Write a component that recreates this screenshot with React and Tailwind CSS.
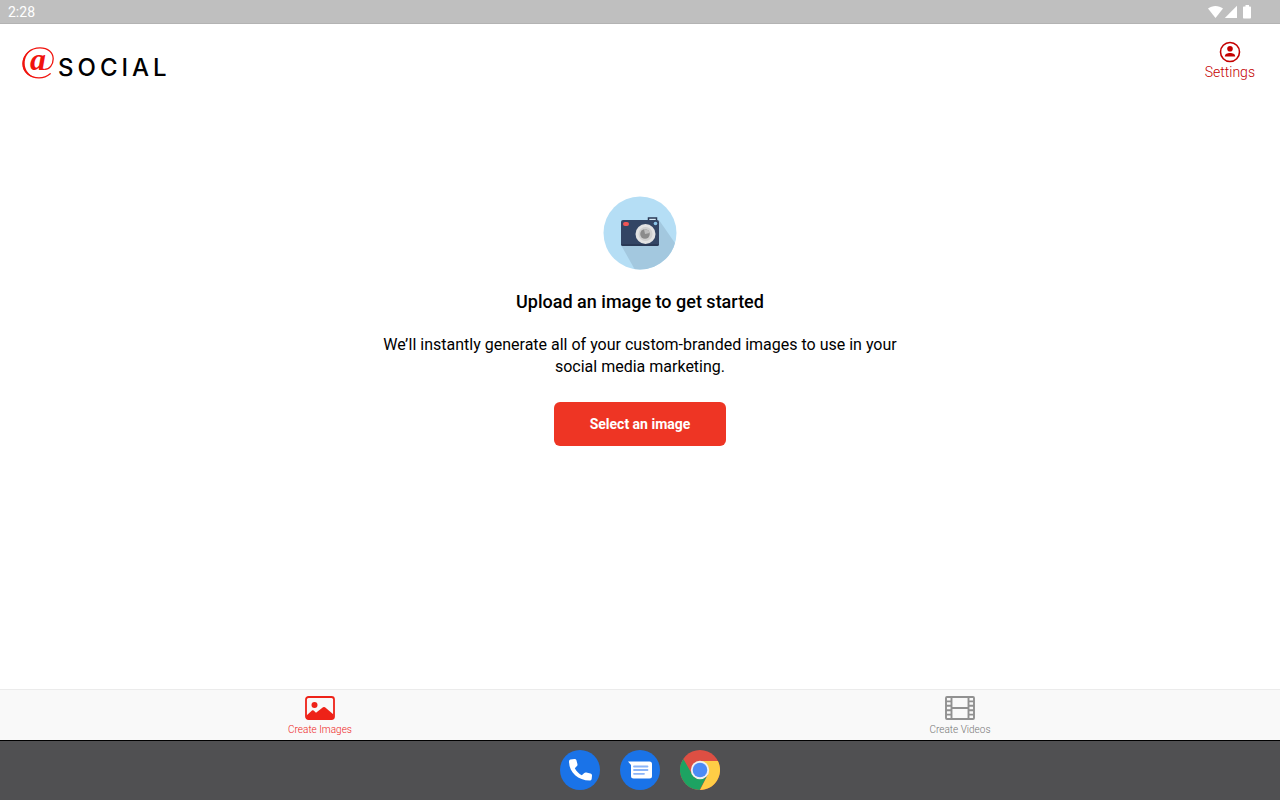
function AtSocialLogo() {
  return (
    <a href="#home" className="flex items-center gap-1" aria-label="@SOCIAL">
      <svg width="32" height="32" viewBox="0 0 32 32" className="overflow-visible" aria-hidden="true">
        <path
          d="M28.2 26.800C25.200 29.400 21.300 30.900 17 30.900C8.200 30.900 1 25.200 1 16.600C1 7.600 8.500 .9 18 .9C26 .9 31.200 5.500 31.200 11.800C31.200 17.800 27.300 22.400 22.800 22.400"
          fill="none"
          stroke="#f0140e"
          strokeWidth="1.300"
          strokeLinecap="round"
        />
        <path
          d="M.5 17C.4 10.600 4.500 4.600 10.500 2.200C5.500 5.800 2.700 10.500 2.700 16.500C2.700 23 7 28.300 13 30.600C5.500 29.300 .6 24 .5 17Z"
          fill="#f0140e"
        />
        <text x="8" y="23" fill="#f0140e" className="font-['Liberation_Serif',serif] text-[32px] leading-6 font-bold italic">
          a
        </text>
      </svg>
      <span className="pt-2.5 font-[Inter,sans-serif] text-2xl leading-6 font-medium tracking-[4px] text-black">
        SOCIAL
      </span>
    </a>
  );
}

function StatusBar() {
  return (
    <div className="flex h-6 items-center justify-between border-b border-[#b3b3b3] bg-[#bfbfbf] pr-[27px] pl-2 text-white">
      <span className="text-sm leading-6">2:28</span>
      <svg width="46" height="16" viewBox="0 0 46 16" fill="currentColor" aria-hidden="true">
        <path d="M1 4.600C5.200 1 11.800 1 16 4.600L8.500 14Z" />
        <path d="M30 1.800V14H17.800Z" />
        <path d="M38.500 1H42V2.400H43.200C43.700 2.400 44 2.800 44 3.400V13.600C44 14.200 43.700 14.600 43.200 14.600H37C36.400 14.600 36 14.200 36 13.600V3.400C36 2.800 36.400 2.400 37 2.400H38.500Z" />
      </svg>
    </div>
  );
}

function CameraIcon() {
  return (
    <svg width="74" height="74" viewBox="0 0 74 74" aria-hidden="true">
      <defs>
        <clipPath id="disc">
          <circle cx="37" cy="37" r="36.500" />
        </clipPath>
      </defs>
      <circle cx="37" cy="37" r="36.500" fill="#b5def5" />
      <path d="M18 49L40 88H92V76L56 24Z" fill="#a3c8df" clipPath="url(#disc)" />
      <rect x="45.500" y="22" width="8" height="3" fill="#d8eaf5" stroke="#2b3a55" strokeWidth="1.500" />
      <rect x="18" y="24" width="38" height="26" rx="2" fill="#334564" />
      <path d="M18 48H56A2 2 0 0 1 54 50H20A2 2 0 0 1 18 48Z" fill="#2a3955" />
      <rect x="20" y="26" width="6" height="4" rx="2" fill="#f05555" />
      <circle cx="52.500" cy="27.500" r="1.800" fill="#8cc5e8" />
      <circle cx="42.500" cy="38" r="10" fill="#e3e3e3" />
      <circle cx="42.500" cy="38" r="7" fill="#cfcfcf" />
      <circle cx="42" cy="38" r="4.800" fill="#8b8b8b" />
      <path d="M42 38L41 33.300A4.800 4.800 0 0 1 46.700 37Z" fill="#bdbdbd" />
    </svg>
  );
}

function ProfileIcon() {
  return (
    <svg width="22" height="22" viewBox="0 0 22 22" aria-hidden="true">
      <circle cx="11" cy="11" r="9.500" fill="none" stroke="currentColor" strokeWidth="1.600" />
      <circle cx="11" cy="7.800" r="2.800" fill="currentColor" />
      <path d="M5.800 15.500C5.800 12.700 8.400 11.900 11 11.900S16.200 12.700 16.200 15.500Z" fill="currentColor" />
    </svg>
  );
}

function ImagesIcon() {
  return (
    <svg width="30" height="24" viewBox="0 0 30 24" aria-hidden="true">
      <rect x="1" y="1" width="28" height="22" rx="2.500" fill="none" stroke="currentColor" strokeWidth="1.800" />
      <circle cx="9.500" cy="9" r="3" fill="currentColor" />
      <path d="M1.500 19.500L7 14.500Q7.800 14 8.600 14.600L11 16.800L18 11.300Q19 10.600 20 11.300L28.500 18.500V22.500H1.500Z" fill="currentColor" />
    </svg>
  );
}

function FilmIcon() {
  return (
    <svg width="30" height="24" viewBox="0 0 30 24" fill="none" stroke="#919191" strokeWidth="1.900" aria-hidden="true">
      <rect x="1" y="1" width="28" height="22" rx="1" />
      <path d="M6.500 1V23M23.500 1V23M6.500 12H23.500" />
      <path d="M1 5.400H6.500M1 9.800H6.500M1 14.200H6.500M1 18.600H6.500M23.500 5.400H29M23.500 9.800H29M23.500 14.200H29M23.500 18.600H29" />
    </svg>
  );
}

function PhoneApp() {
  return (
    <svg width="40" height="40" viewBox="0 0 40 40" aria-hidden="true">
      <circle cx="20" cy="20" r="20" fill="#1a73e8" />
      <path
        d="M10.500 9.600L14.300 9C15.400 8.800 16.200 9.400 16.500 10.400L17.400 14C17.600 14.900 17.400 15.700 16.700 16.300L14.800 18.200C16.500 21.300 18.700 23.600 21.800 25.300L24 23.200C24.700 22.600 25.500 22.400 26.300 22.600L30.400 23.500C31.500 23.800 32.100 24.600 32 25.700L31.700 28.700C31.600 29.800 30.800 30.500 29.700 30.500C18 30.500 9.200 22.500 9 11.500C9 10.500 9.500 9.800 10.500 9.600Z"
        fill="#fff"
      />
    </svg>
  );
}

function MessagesApp() {
  return (
    <svg width="40" height="40" viewBox="0 0 40 40" aria-hidden="true">
      <circle cx="20" cy="20" r="20" fill="#1a73e8" />
      <path d="M8 11.500H29.500A2.500 2.500 0 0 1 32 14V26A2.500 2.500 0 0 1 29.500 28.500H13.500A2.500 2.500 0 0 1 11 26V15Z" fill="#fff" />
      <path d="M14 16.500H27.500M14 20H27.500M14 23.800H24" stroke="#8ab4f8" strokeWidth="1.800" strokeLinecap="round" />
    </svg>
  );
}

function ChromeApp() {
  return (
    <svg width="40" height="40" viewBox="0 0 40 40" aria-hidden="true">
      <circle cx="20" cy="20" r="20" fill="#dd4f43" />
      <path d="M20 11H37.900A20 20 0 0 1 20 40L27.800 24.500Z" fill="#ffcd46" />
      <path d="M3.400 9L12.200 24.500A9 9 0 0 0 27.800 24.500L19.500 40A20 20 0 0 1 3.400 9Z" fill="#1da362" />
      <circle cx="20" cy="20" r="9.200" fill="#f1f1f1" />
      <circle cx="20" cy="20" r="7.300" fill="#4c8bf5" />
    </svg>
  );
}

const tabs = [
  { label: "Create Images", icon: ImagesIcon, active: true },
  { label: "Create Videos", icon: FilmIcon, active: false },
];

const apps = [
  { label: "Phone", icon: PhoneApp },
  { label: "Messages", icon: MessagesApp },
  { label: "Chrome", icon: ChromeApp },
];

export default function App() {
  return (
    <div className="flex min-h-screen flex-col bg-white font-[Roboto,sans-serif] text-black">
      <StatusBar />

      {/* HEADER */}
      <header className="flex items-start justify-between px-[22px] pt-4">
        <div className="pt-1.5">
          <AtSocialLogo />
        </div>
        <button className="flex flex-col items-center px-[3px] pt-px text-sm leading-[18px] font-light text-[#c40000]">
          <ProfileIcon />
          Settings
        </button>
      </header>

      {/* UPLOAD PROMPT */}
      <main className="flex flex-1 flex-col items-center px-6 pt-[115px] text-center">
        <CameraIcon />
        <h1 className="mt-5 text-lg leading-6 font-medium">Upload an image to get started</h1>
        <p className="mt-5 max-w-[540px] text-base leading-[22px]">
          We’ll instantly generate all of your custom-branded images to use in your social media marketing.
        </p>
        <button className="mt-6 h-11 w-[172px] rounded-md bg-[#ee3524] text-sm font-bold text-white">
          Select an image
        </button>
      </main>

      {/* TABS */}
      <nav className="grid grid-cols-2 border-t border-[#ebebeb] bg-[#f9f9f9]">
        {tabs.map(({ label, icon: Icon, active }) => (
          <button
            key={label}
            className={`flex flex-col items-center gap-1 pt-1.5 pb-1 text-[10px] leading-3 font-light ${
              active ? "text-[#ee2218]" : "text-[#757575]"
            }`}
          >
            <Icon />
            {label}
          </button>
        ))}
      </nav>

      {/* DOCK */}
      <footer className="flex justify-center gap-5 border-t border-black bg-[#505052] pt-[9px] pb-2.5">
        {apps.map(({ label, icon: Icon }) => (
          <button key={label} aria-label={label}>
            <Icon />
          </button>
        ))}
      </footer>
    </div>
  );
}
